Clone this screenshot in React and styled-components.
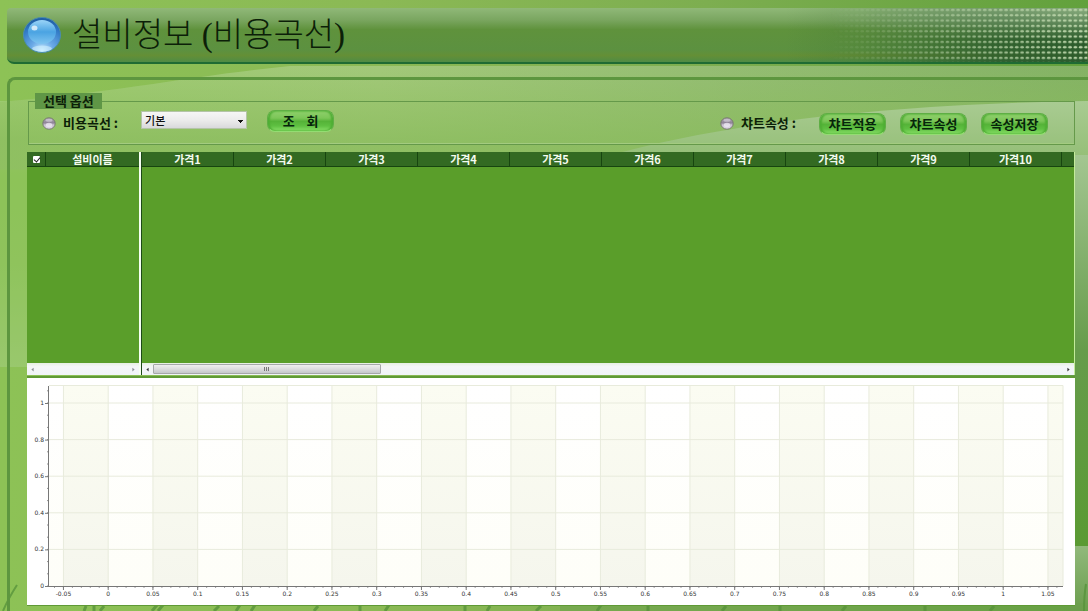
import React, { useState } from 'react'
import styled, { createGlobalStyle } from 'styled-components'

const PRICE_COLUMNS = ['가격1', '가격2', '가격3', '가격4', '가격5', '가격6', '가격7', '가격8', '가격9', '가격10']

const GlobalStyle = createGlobalStyle`
  * {
    box-sizing: border-box;
  }

  body {
    margin: 0;
    background: #86b94f;
    color: #0c1f08;
    font-family: 'Noto Sans CJK KR', sans-serif;
  }
`

const Backdrop = () => (
  <BackdropSvg viewBox='0 0 1088 611' preserveAspectRatio='none' aria-hidden='true'>
    <defs>
      <linearGradient id='base' x1='0' y1='0' x2='1' y2='0'>
        <stop offset='0' stopColor='#8dc256' />
        <stop offset='0.35' stopColor='#8bb955' />
        <stop offset='0.65' stopColor='#7dae50' />
        <stop offset='1' stopColor='#62a13c' />
      </linearGradient>
      <linearGradient id='swoosh' x1='0' y1='0' x2='1' y2='0'>
        <stop offset='0' stopColor='#9fcb72' />
        <stop offset='0.35' stopColor='#a2c87a' />
        <stop offset='0.65' stopColor='#95bd74' />
        <stop offset='1' stopColor='#84b265' />
      </linearGradient>
      <linearGradient id='swooshFade' x1='0' y1='0' x2='0' y2='1'>
        <stop offset='0' stopColor='#8abf56' stopOpacity='0' />
        <stop offset='0.7' stopColor='#88bb5a' stopOpacity='0.7' />
        <stop offset='1' stopColor='#88bb5a' stopOpacity='0.7' />
      </linearGradient>
      <linearGradient id='hill' x1='0' y1='0' x2='0' y2='1'>
        <stop offset='0' stopColor='#a9cb92' />
        <stop offset='1' stopColor='#8cba6c' />
      </linearGradient>
      <linearGradient id='leftShade' x1='0' y1='0' x2='0' y2='1'>
        <stop offset='0' stopColor='#9ccb70' />
        <stop offset='0.3' stopColor='#8cc356' />
        <stop offset='0.6' stopColor='#8fc45c' />
        <stop offset='1' stopColor='#a0cb78' />
      </linearGradient>
      <linearGradient id='rightShade' x1='0' y1='0' x2='0' y2='1'>
        <stop offset='0' stopColor='#a3c691' />
        <stop offset='0.5' stopColor='#669c4b' />
        <stop offset='1' stopColor='#5a9a33' />
      </linearGradient>
      <linearGradient id='cornerShade' x1='0' y1='0' x2='0' y2='1'>
        <stop offset='0' stopColor='#91b97b' />
        <stop offset='1' stopColor='#6a9d4c' />
      </linearGradient>
    </defs>
    <rect width='1088' height='611' fill='url(#base)' />
    <rect y='101' width='60' height='266' fill='url(#leftShade)' />
    <path d='M0 102 C120 92 190 76 290 66 H1088 V170 H0 Z' fill='url(#swoosh)' />
    <path d='M0 102 C120 92 190 76 290 66 H1088 V170 H0 Z' fill='url(#swooshFade)' />
    <rect y='169' width='60' height='198' fill='#8fc45c' opacity='0.4' />
    <path d='M600 158 C720 124 880 104 1088 101 V180 H600 Z' fill='url(#hill)' />
    <rect x='1070' y='155' width='18' height='391' fill='url(#rightShade)' />
    <rect x='1070' y='546' width='18' height='65' fill='url(#cornerShade)' />
    <rect x='560' y='603' width='528' height='8' fill='#6b9f4c' opacity='0.5' />
    <g stroke='#55913a' strokeWidth='3' fill='none' opacity='0.75'>
      <path d='M3 611 Q8 599 17 585' strokeWidth='2' />
      <path d='M84 611 L86 606 M94 611 V606 M100 611 L104 606 M152 611 L157 605 M158 611 L163 605 M214 611 L219 606' />
      <path d='M236 611 L240 605 M251 611 L255 605 M314 611 L318 606 M360 611 V606 M385 611 L389 605' />
      <path d='M465 611 V606 M487 611 L490 606 M536 611 L541 606 M597 611 L601 605 M648 611 V606' />
      <path d='M722 611 L726 606 M780 611 V606 M842 611 L846 606 M925 611 V606 M990 611 L994 606' />
      <path d='M1084 611 Q1084 596 1086 584' strokeWidth='2' />
    </g>
  </BackdropSvg>
)

const HeaderDots = () => (
  <DotsSvg aria-hidden='true'>
    <defs>
      <pattern id='dots' width='5.33' height='5.33' patternUnits='userSpaceOnUse'>
        <ellipse cx='2.6' cy='1.9' rx='1.8' ry='1.2' fill='#b9d3a8' />
      </pattern>
      <linearGradient id='dotShade' x1='0' y1='0' x2='1' y2='0'>
        <stop offset='0' stopColor='#204f28' stopOpacity='0' />
        <stop offset='0.25' stopColor='#204f28' stopOpacity='0.12' />
        <stop offset='0.7' stopColor='#204f28' stopOpacity='0.7' />
        <stop offset='1' stopColor='#204f28' stopOpacity='0.8' />
      </linearGradient>
      <linearGradient id='dotFade' x1='0' y1='0' x2='1' y2='0'>
        <stop offset='0.15' stopColor='#fff' stopOpacity='0' />
        <stop offset='0.55' stopColor='#fff' stopOpacity='0.6' />
        <stop offset='1' stopColor='#fff' stopOpacity='1' />
      </linearGradient>
      <linearGradient id='dotGlow' x1='0' y1='0' x2='0' y2='1'>
        <stop offset='0' stopColor='#a5c596' stopOpacity='0.75' />
        <stop offset='0.6' stopColor='#a5c596' stopOpacity='0' />
      </linearGradient>
      <mask id='dotMask'>
        <rect width='100%' height='100%' fill='url(#dotFade)' />
      </mask>
    </defs>
    <rect width='100%' height='100%' fill='url(#dotShade)' />
    <rect width='100%' height='100%' fill='url(#dotGlow)' mask='url(#dotMask)' />
    <rect width='100%' height='100%' fill='url(#dots)' mask='url(#dotMask)' />
  </DotsSvg>
)

const Orb = () => (
  <svg width='40' height='38' viewBox='0 0 40 38' aria-hidden='true'>
    <defs>
      <radialGradient id='orbBody' cx='0.5' cy='0.95' r='0.9'>
        <stop offset='0' stopColor='#c4ecff' />
        <stop offset='0.35' stopColor='#6aa9e6' />
        <stop offset='0.8' stopColor='#2f78c4' />
        <stop offset='1' stopColor='#205fa6' />
      </radialGradient>
      <linearGradient id='orbShine' x1='0' y1='0' x2='0' y2='1'>
        <stop offset='0' stopColor='#9ad4f8' />
        <stop offset='0.5' stopColor='#4aa3e2' />
        <stop offset='1' stopColor='#7fc4f0' />
      </linearGradient>
    </defs>
    <ellipse cx='20' cy='19' rx='18.5' ry='17.5' fill='url(#orbBody)' stroke='#4c8daa' />
    <ellipse cx='20' cy='16' rx='14' ry='12' fill='url(#orbShine)' />
    <ellipse cx='12.5' cy='12' rx='3' ry='2.5' fill='#fff' opacity='0.7' />
    <ellipse cx='20' cy='32.5' rx='10' ry='3' fill='#d9f4ff' opacity='0.55' />
  </svg>
)

const Bullet = () => (
  <svg width='14' height='13' viewBox='0 0 14 13' aria-hidden='true'>
    <defs>
      <linearGradient id='bulletBody' x1='0' y1='0' x2='0' y2='1'>
        <stop offset='0' stopColor='#b9b0bd' />
        <stop offset='0.45' stopColor='#8d8296' />
        <stop offset='0.6' stopColor='#c5bccd' />
        <stop offset='1' stopColor='#e6dfee' />
      </linearGradient>
    </defs>
    <ellipse cx='7' cy='6.5' rx='6.2' ry='5.7' fill='url(#bulletBody)' stroke='#77796f' />
    <ellipse cx='7' cy='8' rx='3.2' ry='2.2' fill='#eee9f4' opacity='0.75' />
    <ellipse cx='7' cy='3.4' rx='3.4' ry='1.4' fill='#d9d3df' opacity='0.6' />
  </svg>
)

// plot area inside the 1048 x 227 canvas
const PLOT = { left: 22, right: 1036, top: 8, bottom: 208 }
const xAt = (v) => 81.2 + v * 895
const yAt = (v) => PLOT.bottom - v * 183

const X_TICKS = Array.from({ length: 23 }, (_, i) => Number((-0.05 + i * 0.05).toFixed(2)))
const Y_TICKS = [0, 0.2, 0.4, 0.6, 0.8, 1]
const X_MINOR = Array.from({ length: 113 }, (_, i) => -0.06 + i * 0.01)
const Y_MINOR = Array.from({ length: 17 }, (_, i) => i * (0.2 / 3))

const Chart = () => (
  <ChartSvg viewBox='0 0 1048 227' role='img' aria-label='비용곡선'>
    <defs>
      <linearGradient id='band' x1='0' y1='0' x2='0' y2='1'>
        <stop offset='0' stopColor='#fbfcf2' />
        <stop offset='1' stopColor='#f5f6ed' />
      </linearGradient>
      <linearGradient id='plain' x1='0' y1='0' x2='0' y2='1'>
        <stop offset='0' stopColor='#ffffff' />
        <stop offset='1' stopColor='#fefef8' />
      </linearGradient>
    </defs>
    <rect x={PLOT.left} y={PLOT.top} width={PLOT.right - PLOT.left} height={200} fill='url(#plain)' />
    {X_TICKS.filter((_, i) => i % 2 === 0).map((v) => (
      <rect
        key={v}
        x={xAt(v)}
        y={PLOT.top}
        width={Math.min(xAt(v + 0.05), PLOT.right) - xAt(v)}
        height={200}
        fill='url(#band)'
      />
    ))}
    <g stroke='#e8ebdc' strokeWidth='1'>
      {X_TICKS.map((v) => <line key={v} x1={xAt(v)} x2={xAt(v)} y1={PLOT.top} y2={PLOT.bottom} />)}
      {Y_TICKS.slice(1).map((v) => <line key={v} x1={PLOT.left} x2={PLOT.right} y1={yAt(v)} y2={yAt(v)} />)}
      <path d={`M${PLOT.left} ${PLOT.top - 0.5} H${PLOT.right} V${PLOT.bottom}`} fill='none' />
    </g>
    <g stroke='#777' strokeWidth='1'>
      <path d={`M${PLOT.left - 0.5} ${PLOT.top} V${PLOT.bottom + 0.5} H${PLOT.right}`} fill='none' />
      {X_TICKS.map((v) => <line key={v} x1={xAt(v)} x2={xAt(v)} y1={208} y2={212} />)}
      {Y_TICKS.map((v) => <line key={v} x1={18} x2={22} y1={yAt(v) + 0.5} y2={yAt(v) + 0.5} />)}
      {X_MINOR.map((v) => <line key={v} x1={xAt(v)} x2={xAt(v)} y1={208} y2={210} strokeWidth='0.7' />)}
      {Y_MINOR.map((v) => <line key={v} x1={20} x2={22} y1={yAt(v)} y2={yAt(v)} strokeWidth='0.8' />)}
    </g>
    {X_TICKS.map((v) => <AxisLabel key={v} x={xAt(v)} y={218} textAnchor='middle'>{v}</AxisLabel>)}
    {Y_TICKS.map((v) => <AxisLabel key={v} x={17} y={yAt(v) + 2} textAnchor='end'>{v}</AxisLabel>)}
  </ChartSvg>
)

const ArrowButton = ({ left, label, dim }) => (
  <ScrollArrow type='button' aria-label={label} $dim={dim}>
    <svg width='4' height='6' viewBox='0 0 4 6'>
      <path d={left ? 'M3.5 0.5 L0.5 3 L3.5 5.5 Z' : 'M0.5 0.5 L3.5 3 L0.5 5.5 Z'} fill='currentColor' />
    </svg>
  </ScrollArrow>
)

const App = () => {
  const [curve, setCurve] = useState('기본')
  const [allChecked, setAllChecked] = useState(true)

  return (
    <>
      <GlobalStyle />
      <Page>
        <Backdrop />

        <Header>
          <HeaderDots />
          <Orb />
          <Title>설비정보 (비용곡선)</Title>
        </Header>

        <Panel>
          <Options>
            <Legend>선택 옵션</Legend>
            <OptionRow>
              <OptionGroup>
                <OptionLabel htmlFor='curve'><Bullet />비용곡선 :</OptionLabel>
                <CurveSelect id='curve' value={curve} onChange={(e) => setCurve(e.target.value)}>
                  <option>기본</option>
                </CurveSelect>
                <GlossyButton type='button'>조&nbsp;&nbsp;&nbsp;&nbsp;회</GlossyButton>
              </OptionGroup>
              <OptionGroup $end>
                <OptionLabel as='span'><Bullet />챠트속성 :</OptionLabel>
                <ButtonGroup>
                  <GlossyButton type='button'>챠트적용</GlossyButton>
                  <GlossyButton type='button'>챠트속성</GlossyButton>
                  <GlossyButton type='button'>속성저장</GlossyButton>
                </ButtonGroup>
              </OptionGroup>
            </OptionRow>
          </Options>

          <Grid>
            <FixedPane>
              <PaneBody>
                <Table>
                  <thead>
                    <tr>
                      <HeadCell $width={19}>
                        <HeadCheck
                          type='checkbox'
                          aria-label='전체'
                          checked={allChecked}
                          onChange={(e) => setAllChecked(e.target.checked)}
                        />
                      </HeadCell>
                      <HeadCell>설비이름</HeadCell>
                    </tr>
                  </thead>
                </Table>
              </PaneBody>
              <ScrollBar>
                <ArrowButton left dim label='왼쪽' />
                <ScrollTrack />
                <ArrowButton dim label='오른쪽' />
              </ScrollBar>
            </FixedPane>
            <ScrollPane>
              <PaneBody>
                <Table>
                  <thead>
                    <tr>
                      {PRICE_COLUMNS.map((name) => <HeadCell key={name} $width={92}>{name}</HeadCell>)}
                      <HeadCell />
                    </tr>
                  </thead>
                </Table>
              </PaneBody>
              <ScrollBar>
                <ArrowButton left label='왼쪽' />
                <ScrollTrack><ScrollThumb><i /><i /><i /></ScrollThumb></ScrollTrack>
                <ArrowButton label='오른쪽' />
              </ScrollBar>
            </ScrollPane>
          </Grid>

          <ChartCard>
            <Chart />
          </ChartCard>
        </Panel>
      </Page>
    </>
  )
}

export default App

const Page = styled.div`
  position: relative;
  min-height: 100vh;
  padding: 8px 0 0 7px;
  overflow: hidden;
  display: flex;
  flex-direction: column;
`

const BackdropSvg = styled.svg`
  position: absolute;
  inset: 0;
  width: 100%;
  height: 100%;
`

const Header = styled.header`
  position: relative;
  display: flex;
  align-items: center;
  gap: 10px;
  height: 56px;
  padding-left: 15px;
  border-bottom: 2px solid #1f6b33;
  border-radius: 4px 0 0 7px;
  background: linear-gradient(#90b878, #7aa660 22%, #5f923c 40%, #5c9140 78%, #648f36 88%, #4f8c45);
  overflow: hidden;
`

const DotsSvg = styled.svg`
  position: absolute;
  top: 0;
  right: 0;
  width: 28%;
  height: 100%;
`

const Title = styled.h1`
  position: relative;
  margin: 0;
  font-family: 'Liberation Serif', 'Noto Sans CJK KR', serif;
  font-size: 33px;
  line-height: 40px;
  font-weight: 300;
  white-space: nowrap;
`

const Panel = styled.main`
  position: relative;
  flex: 1;
  margin-top: 13px;
  padding: 13px 13px 6px 17px;
  border: solid #5d963f;
  border-width: 3px 0 0 3px;
  border-radius: 8px 0 0 0;
`

const Options = styled.fieldset`
  min-width: 0;
  height: 52px;
  margin: 0 0 7px 1px;
  padding: 0;
  border: 1px solid #65994a;
  box-shadow: inset 0 -1px 0 #a3cb80;
`

const Legend = styled.legend`
  margin-left: 6px;
  padding: 0 8px;
  background: #5f9646;
  font-size: 13px;
  line-height: 16px;
  font-weight: 700;
`

const OptionRow = styled.div`
  display: flex;
  justify-content: space-between;
  padding: 0 26px 0 13px;
`

const OptionGroup = styled.div`
  display: flex;
  align-items: flex-start;
  padding-top: ${({ $end }) => ($end ? '4px' : '1px')};

  > label {
    padding-top: 3px;
  }
`

const OptionLabel = styled.label`
  display: flex;
  align-items: center;
  gap: 7px;
  margin-right: 23px;
  font-size: 13px;
  line-height: 20px;
  font-weight: 700;
  white-space: nowrap;
`

const CurveSelect = styled.select`
  width: 106px;
  height: 18px;
  margin: 1px 20px 0 0;
  padding: 0 3px;
  appearance: none;
  border: 1px solid #b4c4a8;
  border-radius: 0;
  background:
    linear-gradient(#111, #111) right 3px top 8px / 5px 1px no-repeat,
    linear-gradient(#111, #111) right 4px top 9px / 3px 1px no-repeat,
    linear-gradient(#111, #111) right 5px top 10px / 1px 1px no-repeat,
    linear-gradient(#f6f6f6, #ececec 50%, #d9d9dc);
  color: #111;
  font-family: inherit;
  font-size: 11px;
  font-weight: 500;
`

const ButtonGroup = styled.div`
  display: flex;
  gap: 14px;
`

const GlossyButton = styled.button`
  width: 67px;
  height: 22px;
  padding: 0 0 1px;
  border: 1px solid #5fae45;
  border-bottom-color: #93dd72;
  border-radius: 8px;
  background: linear-gradient(#8fd06c, #7cc658 35%, #55b338 52%, #5fc042 75%, #8be06a);
  box-shadow: inset 2px 0 2px #4fae34, inset -2px 0 2px #4fae34;
  color: #06250a;
  font-family: inherit;
  font-size: 13px;
  line-height: 18px;
  font-weight: 700;
  white-space: nowrap;
  cursor: pointer;
`

const Grid = styled.section`
  display: flex;
  height: 223px;
  border-right: 1px solid #c3ec9b;
  background: #eef3f0;
`

const FixedPane = styled.div`
  width: 114px;
  display: flex;
  flex-direction: column;
  border: solid #f6fff2;
  border-width: 0 2px 0 0;
`

const ScrollPane = styled.div`
  flex: 1;
  min-width: 0;
  display: flex;
  flex-direction: column;
  border-left: 1px solid #1d4a17;
`

const PaneBody = styled.div`
  flex: 1;
  background: #5a9e2a;
  overflow: hidden;
`

const Table = styled.table`
  width: 100%;
  table-layout: fixed;
  border-collapse: separate;
  border-spacing: 0;
`

const HeadCell = styled.th`
  width: ${({ $width }) => ($width ? `${$width}px` : 'auto')};
  height: 15px;
  padding: 0;
  border: solid #17450f;
  border-width: 0 1px 1px 0;
  background: #336a22;
  color: #f4fbf0;
  font-size: 11px;
  line-height: 14px;
  font-weight: 700;

  &:last-child {
    border-right: 0;
  }
`

const HeadCheck = styled.input`
  display: block;
  width: 7px;
  height: 7px;
  margin: 0 auto;
  appearance: none;
  border-radius: 1px;
  background: #fff;
  position: relative;

  &:checked::after {
    content: '';
    position: absolute;
    left: 2px;
    top: 0;
    width: 3px;
    height: 5px;
    border: solid #222;
    border-width: 0 1px 1px 0;
    transform: rotate(40deg);
  }
`

const ScrollBar = styled.div`
  display: flex;
  height: 12px;
  background: linear-gradient(#e6efe2, #f4f6f7 30%, #f0f4f8);
`

const ScrollArrow = styled.button`
  display: flex;
  align-items: center;
  justify-content: center;
  width: 11px;
  padding: 0;
  border: 0;
  background: none;
  color: ${({ $dim }) => ($dim ? '#8a8f93' : '#333')};

  svg {
    width: 3px;
    height: 5px;
  }
`

const ScrollTrack = styled.div`
  flex: 1;
`

const ScrollThumb = styled.div`
  display: flex;
  align-items: center;
  justify-content: center;
  gap: 1px;
  width: 25%;
  height: 10px;
  margin-top: 1px;
  border: 1px solid #a6a8aa;
  border-radius: 1px;
  background: linear-gradient(#efefef, #dcdcde 50%, #c6c8cb);

  i {
    width: 1px;
    height: 4px;
    background: #777;
  }
`

const ChartCard = styled.section`
  margin-top: 3px;
  background: #fff;
  box-shadow: 0 -2px 0 #5f9a35, 0 1px 0 #5f9a35;
`

const ChartSvg = styled.svg`
  display: block;
  width: 100%;
  height: auto;
`

const AxisLabel = styled.text`
  font-family: 'DejaVu Sans', sans-serif;
  font-size: 6px;
  fill: #333;
`
